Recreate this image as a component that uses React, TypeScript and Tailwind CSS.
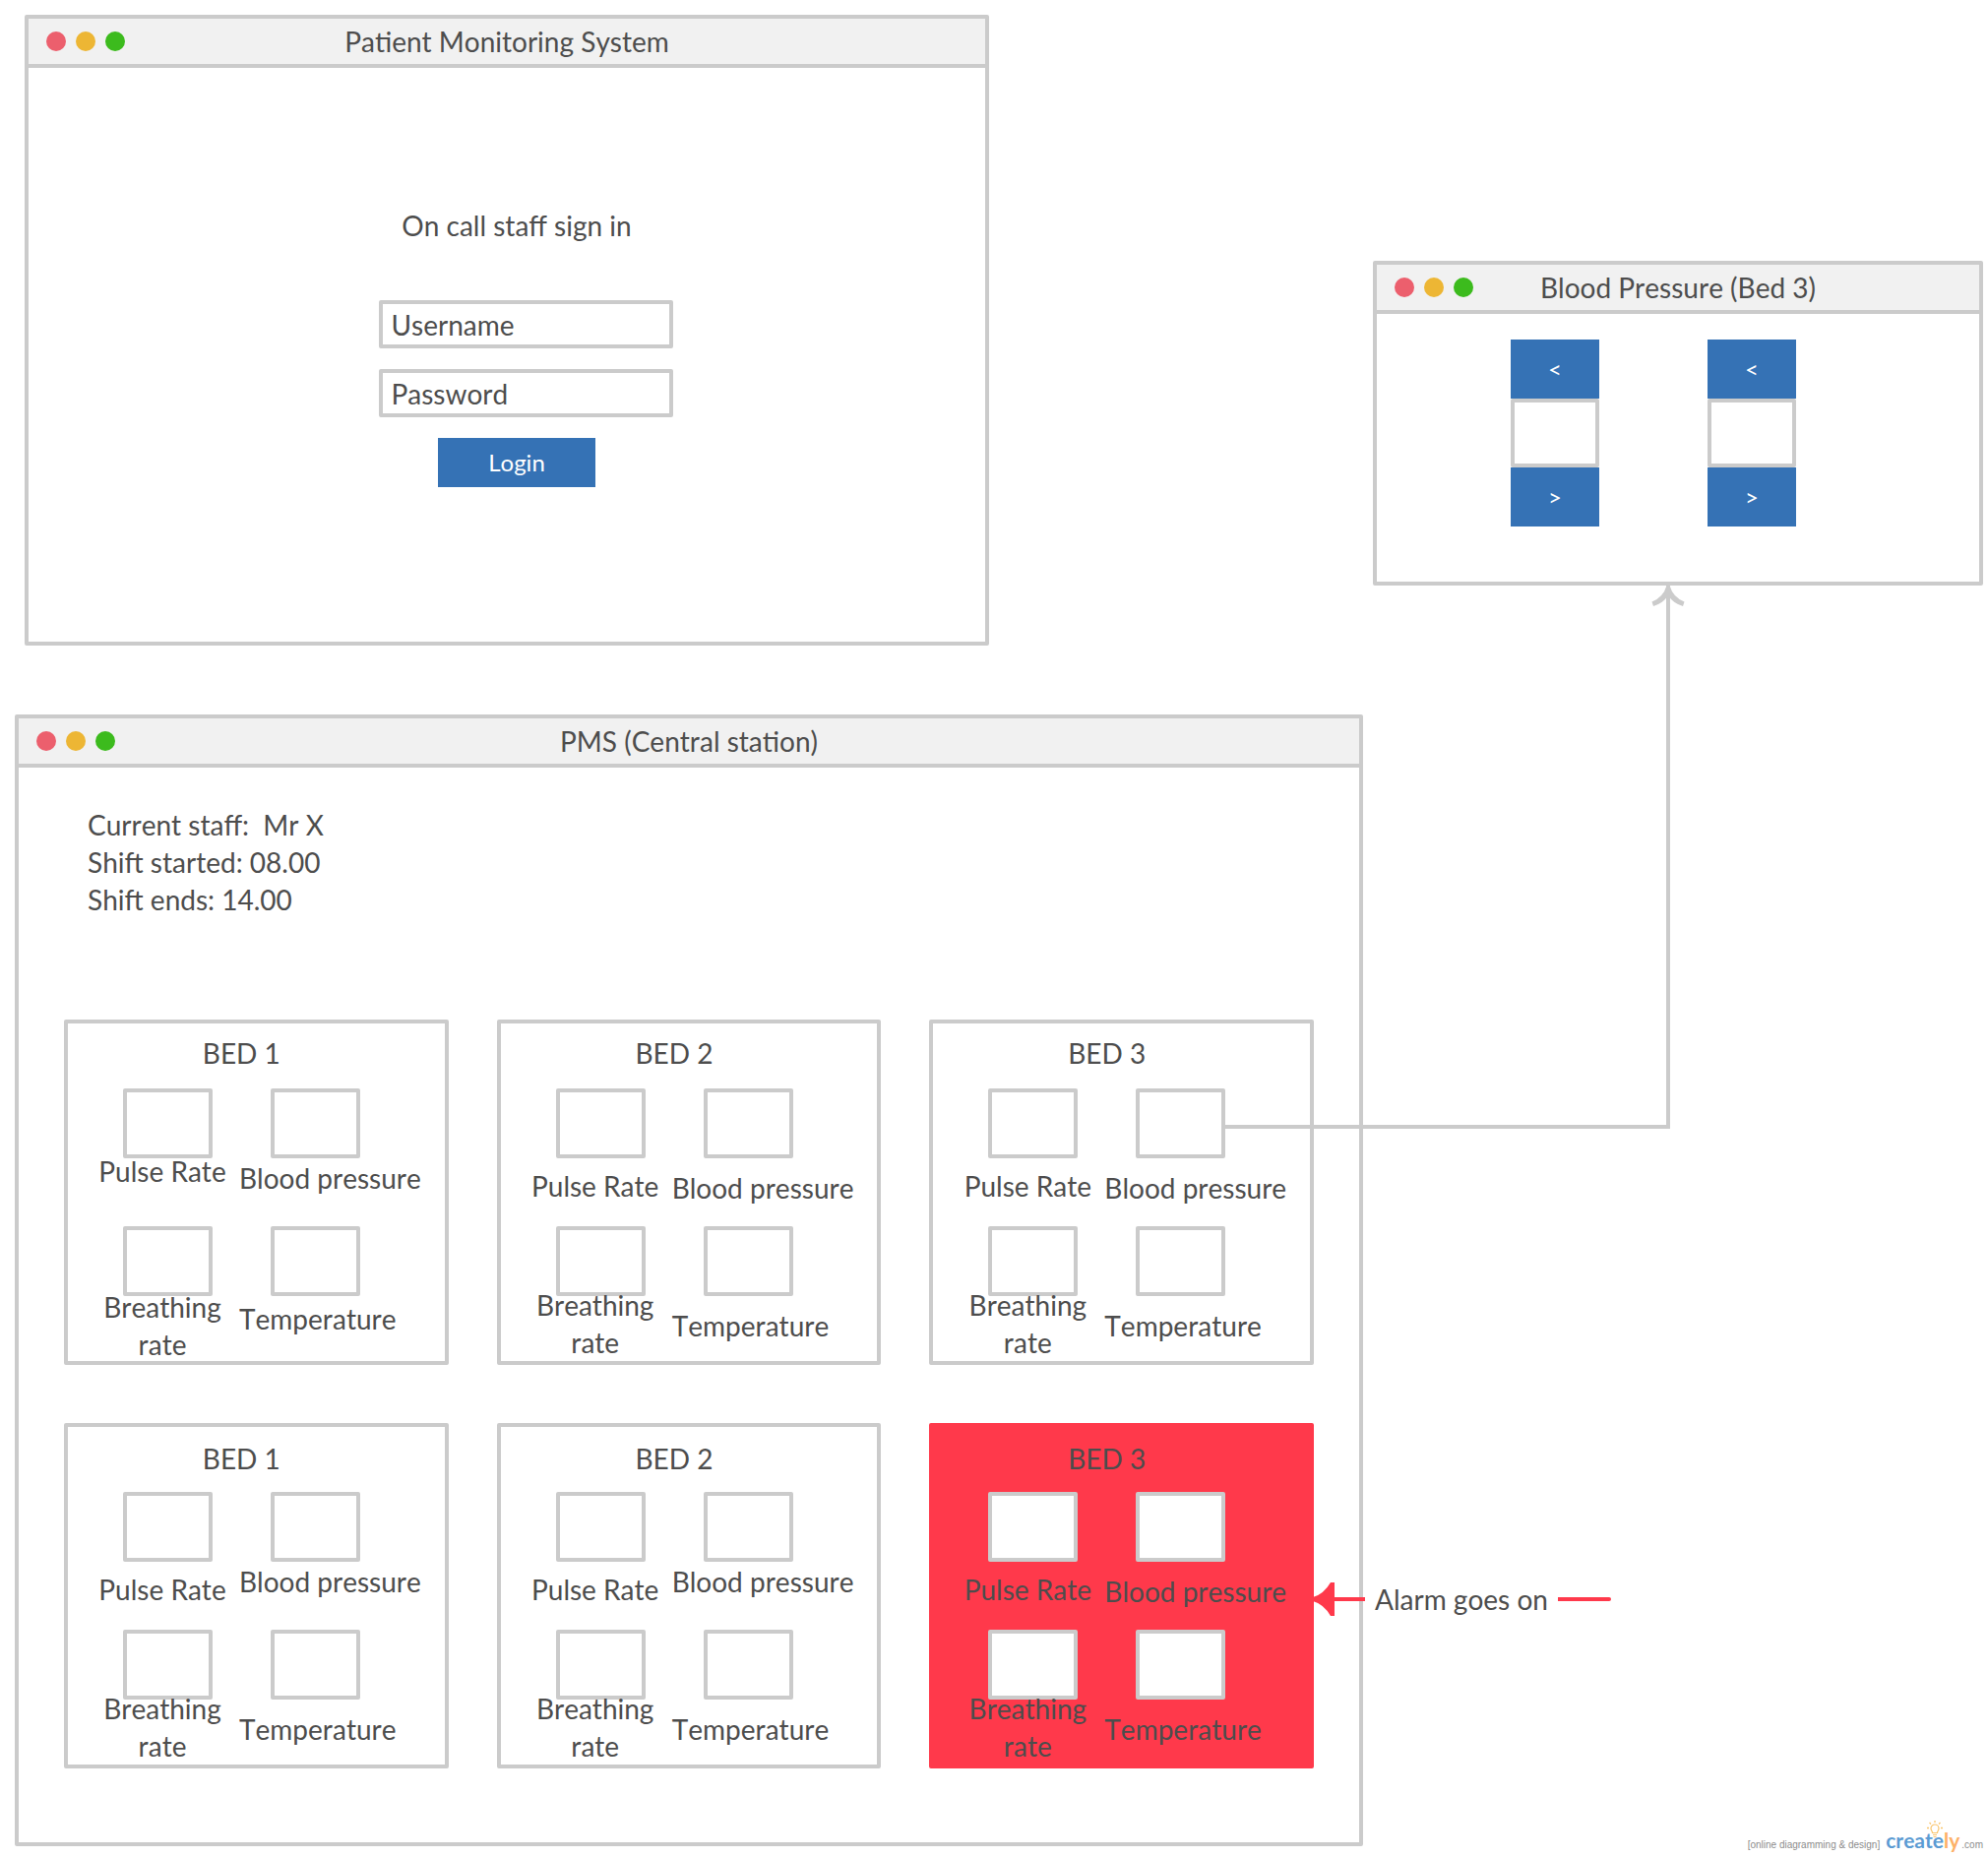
import { type ReactNode } from "react";

const line = "border-4 border-[#cbcbcb] rounded-[2px]";

function WindowFrame({ title, className, children }: { title: string; className: string; children: ReactNode }) {
  return (
    <section className={`${line} bg-white ${className}`}>
      <header className="grid h-[50px] grid-cols-[1fr_auto_1fr] items-center border-b-4 border-[#cbcbcb] bg-[#f1f1f1] px-[18px]">
        <div className="flex gap-[10px]">
          <span className="size-5 rounded-full bg-[#ec5f6d]" />
          <span className="size-5 rounded-full bg-[#edb634]" />
          <span className="size-5 rounded-full bg-[#3cbb1d]" />
        </div>
        <h1>{title}</h1>
        <span />
      </header>
      {children}
    </section>
  );
}

function LoginForm() {
  const field =
    "h-[49px] w-full border-4 border-[#cbcbcb] rounded-[2px] bg-white pl-[9px] outline-none placeholder:text-[#4d4d4d] placeholder:opacity-100";
  return (
    <form className="mx-auto flex w-[337px] flex-col items-center pt-[141px] pb-[157px] pl-[38px]" onSubmit={(e) => e.preventDefault()}>
      <h2 className="mr-[18px] mb-[57px]">On call staff sign in</h2>
      <input className={`${field} mb-[21px]`} type="text" aria-label="Username" placeholder="Username" />
      <input className={field} type="password" aria-label="Password" placeholder="Password" />
      <button type="submit" className="mt-[21px] mr-[18px] h-[50px] w-40 bg-[#3572b5] text-[24px] text-white">
        Login
      </button>
    </form>
  );
}

function Stepper({ name }: { name: string }) {
  const button = "h-[60px] bg-[#3572b5] text-[24px] text-white";
  return (
    <div className="flex w-[90px] flex-col">
      <button type="button" aria-label={`${name} up`} className={button}>
        {"<"}
      </button>
      <input type="text" aria-label={name} className={`${line} h-[70px] w-full bg-white text-center`} />
      <button type="button" aria-label={`${name} down`} className={button}>
        {">"}
      </button>
    </div>
  );
}

type Bed = { name: string; head: string; pulse: string; pressure: string; breathing: string; temperature: string; alarm?: boolean };

const beds: Bed[] = [
  { name: "BED 1", head: "pt-[11px]", pulse: "-mt-1.5", pressure: "mt-px", breathing: "-mt-2", temperature: "mt-1" },
  { name: "BED 2", head: "pt-[11px]", pulse: "mt-[9px]", pressure: "mt-[11px]", breathing: "-mt-2.5", temperature: "mt-[11px]" },
  { name: "BED 3", head: "pt-[11px]", pulse: "mt-[9px]", pressure: "mt-[11px]", breathing: "-mt-2.5", temperature: "mt-[11px]" },
  { name: "BED 1", head: "pt-[13px]", pulse: "mt-[9px]", pressure: "mt-px", breathing: "-mt-2.5", temperature: "mt-[11px]" },
  { name: "BED 2", head: "pt-[13px]", pulse: "mt-[9px]", pressure: "mt-px", breathing: "-mt-2.5", temperature: "mt-[11px]" },
  { name: "BED 3", head: "pt-[13px]", pulse: "mt-[9px]", pressure: "mt-[11px]", breathing: "-mt-2.5", temperature: "mt-[11px]", alarm: true },
];

function Vital({ label, gap, side }: { label: string; gap: string; side: "left" | "right" }) {
  return (
    <label className={side === "left" ? "flex flex-col text-center" : "flex flex-col whitespace-nowrap"}>
      <input
        readOnly
        className={`${line} h-[71px] w-[91px] shrink-0 bg-white outline-none ${side === "left" ? "ml-[30px]" : "ml-8"}`}
      />
      <span className={gap}>{label}</span>
    </label>
  );
}

function BedCard({ bed }: { bed: Bed }) {
  return (
    <article
      className={`h-[351px] rounded-[2px] border-4 ${bed.alarm ? "border-[#ff394b] bg-[#ff394b]" : "border-[#cbcbcb] bg-white"}`}
    >
      <h2 className={`h-[66px] pr-[30px] text-center ${bed.head}`}>{bed.name}</h2>
      <div className="grid grid-cols-[140px_1fr] grid-rows-[140px_auto] gap-x-2 pl-[26px]">
        <Vital label="Pulse Rate" gap={bed.pulse} side="left" />
        <Vital label="Blood pressure" gap={bed.pressure} side="right" />
        <Vital label="Breathing rate" gap={bed.breathing} side="left" />
        <Vital label="Temperature" gap={bed.temperature} side="right" />
      </div>
    </article>
  );
}

function Brand() {
  return (
    <footer className="mt-auto mr-[5px] flex items-baseline justify-end font-['Liberation_Sans'] text-[10px] leading-[12px] text-[#8c8c8c]">
      <span className="mr-[6px]">[online diagramming &amp; design]</span>
      <a href="#creately" className="relative mr-[2px] font-['Lato'] text-[21px] leading-[28px] font-bold text-[#5b9bd3]">
        create<span className="text-[#fdb168]">ly</span>
        <svg className="absolute -top-[6px] left-[41px]" width="18" height="18" viewBox="0 0 18 18" fill="none" stroke="#f9c56c">
          <path d="M6.500 12.500C6.500 10.500 5 10 5 8a4 4 0 0 1 8 0c0 2-1.500 2.500-1.500 4.500zM7 14.500h4M7.500 16.500h3" strokeWidth="1.200" />
          <path d="M9 0v2M3.500 2l1.500 1.500M14.500 2L13 3.500M1 7.500h2M15 7.500h2" strokeWidth="1.300" />
        </svg>
      </a>
      <span>.com</span>
    </footer>
  );
}

export default function App() {
  return (
    <main className="grid min-h-screen grid-cols-[1385fr_635fr] bg-white font-['Lato',sans-serif] text-[28px] leading-[38px] text-[#4d4d4d] [font-kerning:none]">
      <div className="flex flex-col gap-[70px] pt-[15px] pb-3">
        <WindowFrame title="Patient Monitoring System" className="mr-[380px] ml-[25px]">
          <LoginForm />
        </WindowFrame>
        <WindowFrame title="PMS (Central station)" className="ml-[15px]">
          <div className="px-[46px] pt-[39px] pb-[75px]">
            <div className="mb-[103px] pl-6 whitespace-pre">
              <p>{"Current staff:  Mr X"}</p>
              <p>Shift started: 08.00</p>
              <p>Shift ends: 14.00</p>
            </div>
            <div className="grid grid-cols-3 gap-x-[49px] gap-y-[59px]">
              {beds.map((bed, i) => (
                <BedCard key={i} bed={bed} />
              ))}
            </div>
          </div>
        </WindowFrame>
      </div>

      <div className="flex flex-col pt-[265px] pb-[4px]">
        <WindowFrame title="Blood Pressure (Bed 3)" className="mr-[5px] ml-[10px]">
          <div className="flex justify-center gap-[110px] pt-[26px] pr-[50px] pb-14">
            <Stepper name="Systolic" />
            <Stepper name="Diastolic" />
          </div>
        </WindowFrame>

        {/* Connector from the bed 3 reading up to its detail window */}
        <div className="pointer-events-none relative mr-[323px] -ml-[141px] h-[552px] border-r-4 border-b-4 border-[#cbcbcb]">
          <svg className="absolute top-0 -right-[19px]" width="34" height="24" viewBox="0 0 34 24" fill="#cbcbcb">
            <path d="M15.500 0Q12 12 .5 16.500L2 21Q12 18 17 10Q22 18 32 21L33.500 16.500Q22 12 18.500 0z" />
          </svg>
        </div>

        <div className="relative mt-[459px] -ml-[51px] flex items-center">
          <svg width="53" height="36" viewBox="0 0 53 36" fill="#ff394b">
            <path d="M0 16Q11 13 18 1h4v15h31v4H22v15h-4Q11 23 0 20z" />
          </svg>
          <span className="mx-[10px]">Alarm goes on</span>
          <span className="h-1 w-[54px] rounded-r-full bg-[#ff394b]" />
        </div>

        <Brand />
      </div>
    </main>
  );
}
